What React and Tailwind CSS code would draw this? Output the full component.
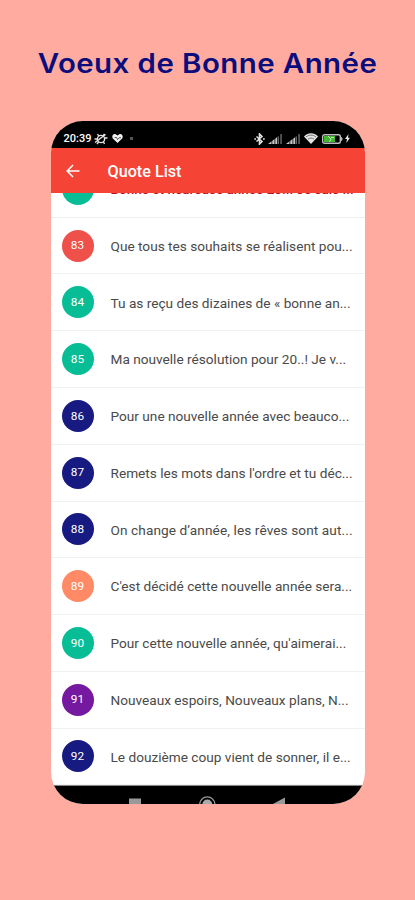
import React from 'react';

const quotes = [
  { id: 83, color: 'bg-[#ef504a]', text: 'Que tous tes souhaits se réalisent pou...' },
  { id: 84, color: 'bg-[#07bd96]', text: 'Tu as reçu des dizaines de « bonne an...' },
  { id: 85, color: 'bg-[#07bd96]', text: 'Ma nouvelle résolution pour 20..! Je v...' },
  { id: 86, color: 'bg-[#171a80]', text: 'Pour une nouvelle année avec beauco...' },
  { id: 87, color: 'bg-[#171a80]', text: "Remets les mots dans l'ordre et tu déc..." },
  { id: 88, color: 'bg-[#171a80]', text: 'On change d’année, les rêves sont aut...', tracking: 'tracking-[0.09px]' },
  { id: 89, color: 'bg-[#ff8a65]', text: "C'est décidé cette nouvelle année sera..." },
  { id: 90, color: 'bg-[#07bd96]', text: "Pour cette nouvelle année, qu'aimerai..." },
  { id: 91, color: 'bg-[#751aa0]', text: 'Nouveaux espoirs, Nouveaux plans, N...' },
  { id: 92, color: 'bg-[#171a80]', text: 'Le douzième coup vient de sonner, il e...' },
];

function Signal() {
  return (
    <svg className="h-[10px] w-[14px]" viewBox="0 0 14 10">
      <path d="M0 10L9 3.200V10z" fill="#c9c9c9" />
      <path d="M3.500 3h.8v7h-.8zM6.500 3h.8v7h-.8z" fill="#000" />
      <path d="M9.500 2.500h1.500V10H9.500zM12.300 0h1.500v10h-1.500z" fill="#666" />
    </svg>
  );
}

function StatusBar() {
  return (
    <div className="flex h-[27px] shrink-0 items-center bg-black pl-[13px] pr-[15px] pt-[8px] text-white">
      <span className="w-[29px] whitespace-nowrap text-[11px] font-medium leading-none">20:39</span>
      <svg className="ml-[1px] h-3 w-[14px]" viewBox="0 0 14 12" fill="none" stroke="#e4e4e4" strokeWidth="1.400">
        <circle cx="7" cy="6" r="3.600" />
        <path d="M3.500 1l1.200 2M10.500 .8L9 3M3 11l1.500-2M10.500 11l-1-2M.5 6h3M10.500 5h3M1 9.500L11.500 1.500" />
      </svg>
      <svg className="ml-[4px] h-[9px] w-[11px]" viewBox="0 0 11 9">
        <path d="M5.500 9L.8 4.500C-.8 2 1.500-.9 4 .4L5.500 1.500 7 .4c2.500-1.300 4.800 1.600 3.200 4.100z" fill="#f0f0f0" />
        <path d="M2.500 3.500h2l1 2 1.500-1.700H9" fill="none" stroke="#333" strokeWidth=".8" />
      </svg>
      <span className="ml-[7px] h-[3px] w-[3px] bg-[#555]" />
      <div className="ml-auto flex items-center">
        <svg className="h-3 w-[11px]" viewBox="0 0 11 12" fill="none" stroke="#e0e0e0" strokeWidth="1.600">
          <path d="M2.500 3.500l5.500 5-2.500 2.500V1L8 3.500l-5.500 5" />
          <path d="M.3 6h1.700M9 6h1.700" />
        </svg>
        <div className="ml-[3px] flex gap-[4px]">
          <Signal />
          <Signal />
        </div>
        <svg className="ml-[4px] h-[11px] w-[14px]" viewBox="0 0 14 11">
          <path d="M7 11L0 3.500C4-.8 10-.8 14 3.500z" fill="#e4e4e4" />
          <path d="M2 4c3-2.500 7-2.500 10 0M4 6.200c2-1.500 4-1.500 6 0" fill="none" stroke="#555" strokeWidth=".8" />
        </svg>
        <svg className="ml-[4px] h-[10px] w-[21px]" viewBox="0 0 21 10">
          <rect x=".7" y=".7" width="17.600" height="8.600" rx="1.800" fill="none" stroke="#bdbdbd" strokeWidth="1.400" />
          <path d="M19 3c2 .5 2 3.500 0 4z" fill="#bdbdbd" />
          <path d="M2 2h11v6H2z" fill="#43b62f" />
          <path d="M6 2l3 3-1.500 3M9 3.500h3" fill="none" stroke="#c9edc2" strokeWidth=".9" />
        </svg>
        <svg className="ml-[2px] h-[9px] w-[5px]" viewBox="0 0 5 9" fill="#e6e6e6">
          <path d="M3.500 0L0 5h2L1.300 9 5 3.700H3z" />
        </svg>
      </div>
    </div>
  );
}

function NavBar() {
  return (
    <div className="h-[20px] shrink-0 border-t border-[#888] bg-black">
      <svg className="block h-[18px] w-[314px]" viewBox="0 0 314 18">
        <rect x="78" y="12.500" width="12" height="12" fill="#999" />
        <circle cx="156.300" cy="18.500" r="7.600" fill="none" stroke="#999" strokeWidth="1.400" />
        <circle cx="156.300" cy="18.500" r="5" fill="#aaa" />
        <path d="M221 18.500L234 11.500v14z" fill="#999" />
      </svg>
    </div>
  );
}

export default function App() {
  return (
    <div className="flex h-[900px] w-[415px] flex-col items-center overflow-hidden bg-[#ffab9f] font-['Roboto',sans-serif]">
      <h1 className="flex h-[121px] w-full shrink-0 scale-x-[1.11] items-start justify-center whitespace-nowrap pt-[46px] font-['Inter',sans-serif] text-[26.5px] font-semibold leading-[34px] tracking-[0.4px] text-[#0b0d7c]">
        Voeux de Bonne Année
      </h1>

      <div className="flex h-[683px] w-[314px] shrink-0 flex-col overflow-hidden rounded-[32px] bg-white">
        <StatusBar />
        <header className="flex h-[45px] shrink-0 items-center bg-[#f54336] pl-[15px] text-white">
          <svg className="h-[14px] w-[14px]" viewBox="0 0 14 14" fill="none" stroke="currentColor" strokeWidth="1.600">
            <path d="M13.500 7H1.500M7 1L1.200 7 7 13" />
          </svg>
          <h2 className="ml-[28px] whitespace-nowrap pt-[3px] text-[16.200px] font-medium">Quote List</h2>
        </header>

        {/* row scrolled halfway under the header */}
        <div className="flex h-[24.700px] shrink-0 items-end overflow-hidden border-b border-[#eeeeee]">
          <div className="flex h-[56px] items-center pl-[11px]">
            <span className="h-8 w-8 shrink-0 rounded-full bg-[#07bd96]" />
            <p className="ml-[17px] whitespace-nowrap pt-px text-[13.500px] font-medium text-[#b3101a]">
              Bonne et heureuse année 20..! Je sais ...
            </p>
          </div>
        </div>

        {quotes.map((quote) => (
          <div key={quote.id} className="flex h-[56.770px] shrink-0 items-center border-b border-[#f1f1f1] pl-[11px]">
            <span className={`flex h-8 w-8 shrink-0 items-center justify-center rounded-full pt-px text-[11.800px] text-white ${quote.color}`}>
              {quote.id}
            </span>
            <p className={`ml-[17px] whitespace-nowrap pt-px text-[13.650px] text-[#4a4a4a] ${quote.tracking || ''}`}>{quote.text}</p>
          </div>
        ))}
        <NavBar />
      </div>
    </div>
  );
}
